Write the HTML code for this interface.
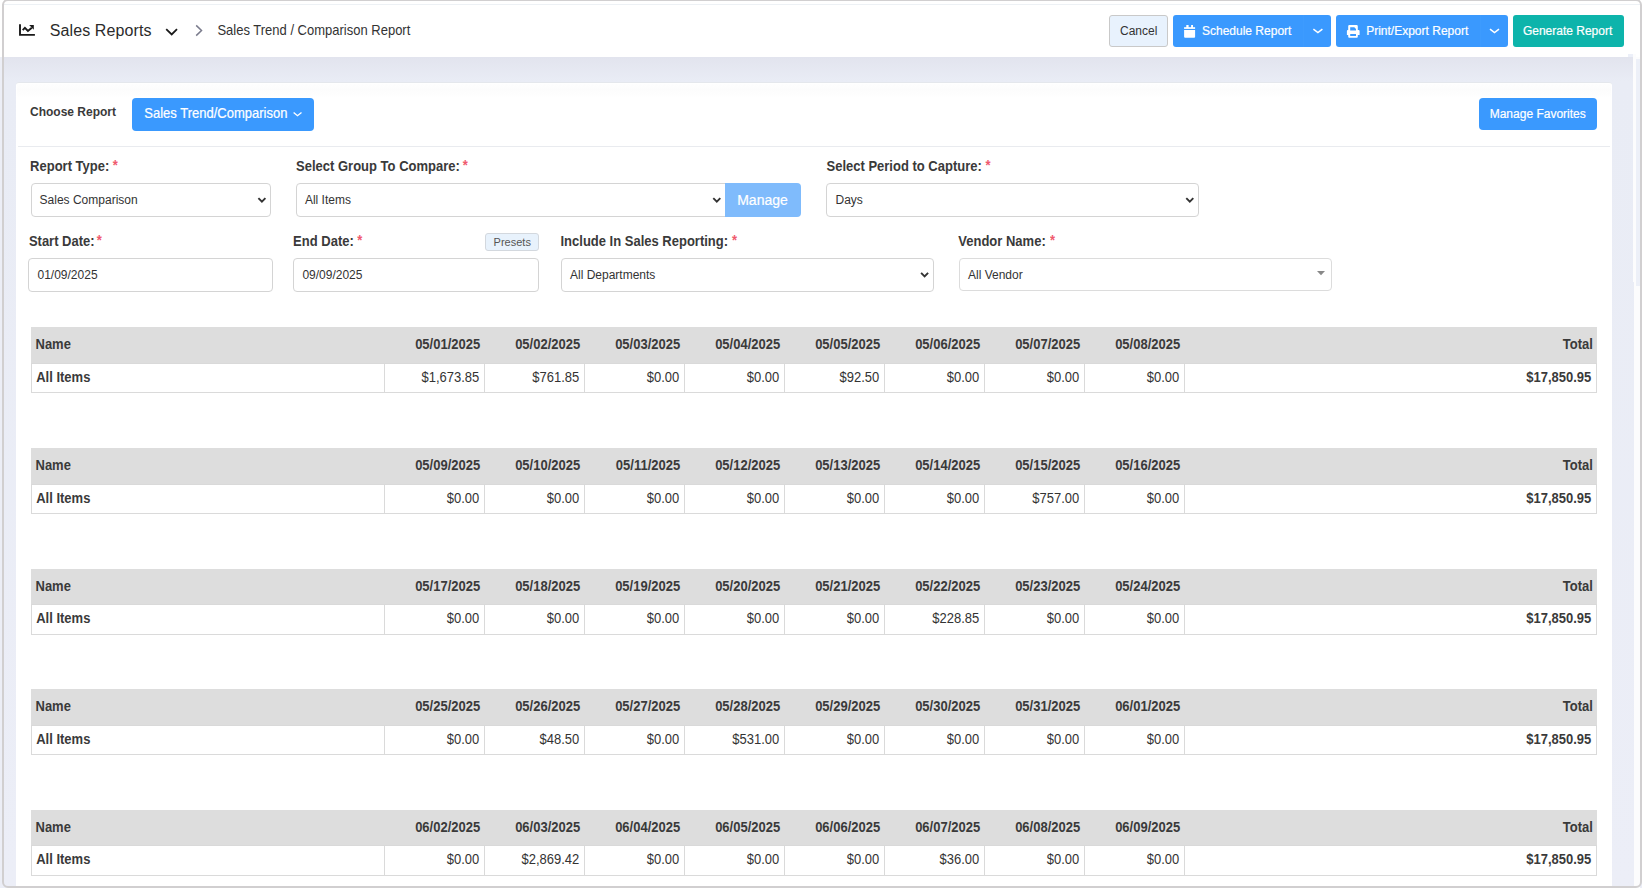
<!DOCTYPE html>
<html><head><meta charset="utf-8"><title>Sales Trend / Comparison Report</title>
<style>
html,body{margin:0;padding:0;width:1644px;height:888px;overflow:hidden;background:#fff}
body{position:relative;font-family:"Liberation Sans",sans-serif}
.r{position:absolute;display:block}
.t{position:absolute;white-space:nowrap;font-family:"Liberation Sans",sans-serif}
</style></head><body>
<div class="r" style="left:0px;top:0px;width:1644px;height:57px;background:#fff"></div>
<div class="r" style="left:0px;top:57px;width:1644px;height:831px;background:linear-gradient(#e2e4ee 0px,#e9ecf5 24px,#eceef7 100%)"></div>
<div class="r" style="left:0px;top:57px;width:2px;height:831px;background:#eceef6"></div>
<div class="r" style="left:1634px;top:57px;width:6px;height:831px;background:#fcfcfd"></div>
<div class="r" style="left:1628px;top:54px;width:5px;height:3px;background:#eceff8"></div>
<div class="r" style="left:1633px;top:54px;width:3px;height:228px;background:#fcfcfd"></div>
<div class="r" style="left:1636px;top:59px;width:4px;height:227px;background:#edf0f8"></div>
<div class="r" style="left:4px;top:3.5px;width:1636px;height:1.5px;background:#edf1f5"></div>
<svg class="r" style="left:15px;top:20px" width="25" height="20" viewBox="0 0 25 20"><path d="M5 4.2V14.9H19.9" fill="none" stroke="#1a1a1a" stroke-width="1.9"/><path d="M7.7 10.1 L9.9 7.8 L12.95 11 L16.8 7.7" fill="none" stroke="#1a1a1a" stroke-width="1.9" stroke-linejoin="miter"/><path d="M14.2 5.1 H18.8 V9.7 Z" fill="#1a1a1a"/></svg>
<span class="t" style="left:49.80px;top:23.00px;font-size:16px;line-height:16px;font-weight:400;color:#2b2b2b;letter-spacing:0.1px;">Sales Reports</span>
<svg class="r" style="left:160px;top:18px" width="50" height="24" viewBox="0 0 50 24"><path d="M6.2 11.2 L11.7 16.5 L17 11.2" fill="none" stroke="#1a1a1a" stroke-width="1.8"/><path d="M36.2 7.4 L41.5 12.5 L36.2 17.6" fill="none" stroke="#7a7b8c" stroke-width="1.5"/></svg>
<span class="t" style="left:217.40px;top:24.00px;font-size:13px;line-height:13px;font-weight:400;color:#333;transform:scaleY(1.09);transform-origin:0 11px;">Sales Trend / Comparison Report</span>
<div class="r" style="left:1109px;top:15px;width:59px;height:32px;background:#e8f2fd;border:1px solid #c9c9c9;border-radius:3px;box-sizing:border-box"></div>
<span class="t" style="left:1120.00px;top:25.00px;font-size:12px;line-height:12px;font-weight:400;color:#333;">Cancel</span>
<div class="r" style="left:1173px;top:15px;width:158px;height:32px;background:#3a99fe;border-radius:3px"></div>
<div class="r" style="left:1303px;top:15px;width:1px;height:32px;background:#3d9bfe"></div>
<svg class="r" style="left:1178px;top:20px" width="30" height="22" viewBox="0 0 30 22"><rect x="8.3" y="5" width="2.3" height="3" fill="#fff"/><rect x="13.1" y="5" width="1.9" height="3" fill="#fff"/><rect x="6.1" y="7.2" width="11" height="1.7" fill="#fff"/><path d="M6.1 10 H17.1 V16.8 Q17.1 17.8 16.1 17.8 H7.1 Q6.1 17.8 6.1 16.8 Z" fill="#fff"/></svg>
<span class="t" style="left:1202.00px;top:25.30px;font-size:12px;line-height:12px;font-weight:400;color:#fff;-webkit-text-stroke:0.2px #fff;">Schedule Report</span>
<svg class="r" style="left:1303px;top:15px" width="28" height="32" viewBox="0 0 28 32"><path d="M10.4 14.2 L14.9 17.6 L19.4 14.2" fill="none" stroke="#fff" stroke-width="1.5"/></svg>
<div class="r" style="left:1336px;top:15px;width:172px;height:32px;background:#3a99fe;border-radius:3px"></div>
<div class="r" style="left:1480px;top:15px;width:1px;height:32px;background:#3d9bfe"></div>
<svg class="r" style="left:1340px;top:20px" width="30" height="22" viewBox="0 0 30 22"><path fill="#fff" fill-rule="evenodd" d="M8.2 6.3 Q8.2 5.1 9.4 5.1 H16.6 Q17.8 5.1 17.8 6.3 V9.9 H18.6 Q19.6 9.9 19.6 10.9 V14.9 H17.8 V16.8 Q17.8 17.8 16.8 17.8 H9.2 Q8.2 17.8 8.2 16.8 V14.9 H6.9 V10.9 Q6.9 9.9 7.9 9.9 H8.2 Z M10.2 7.2 V10.6 H16 V8.9 L14.3 7.2 Z M10.2 14.1 V15.9 H16 V14.1 Z"/></svg>
<span class="t" style="left:1366.20px;top:25.30px;font-size:12px;line-height:12px;font-weight:400;color:#fff;-webkit-text-stroke:0.2px #fff;">Print/Export Report</span>
<svg class="r" style="left:1480px;top:15px" width="28" height="32" viewBox="0 0 28 32"><path d="M10 14.2 L14.5 17.6 L19 14.2" fill="none" stroke="#fff" stroke-width="1.5"/></svg>
<div class="r" style="left:1513px;top:15px;width:111px;height:32px;background:#0db4ab;border-radius:3px"></div>
<span class="t" style="left:1522.90px;top:25.30px;font-size:12px;line-height:12px;font-weight:400;color:#fff;-webkit-text-stroke:0.2px #fff;">Generate Report</span>
<div class="r" style="left:16px;top:82px;width:1596px;height:818px;background:#fff;border-top:1px solid #e4e7ec;box-sizing:border-box;border-radius:3px 3px 0 0"></div>
<div class="r" style="left:17px;top:84px;width:1594px;height:14px;background:linear-gradient(#fefefe,#fcfcfc 40%,#fff)"></div>
<div class="r" style="left:18px;top:146px;width:1592px;height:1px;background:#e9ebef"></div>
<span class="t" style="left:30.00px;top:106.00px;font-size:12px;line-height:12px;font-weight:700;color:#3a3a3a;">Choose Report</span>
<div class="r" style="left:132px;top:98px;width:182px;height:33px;background:#3a99fe;border-radius:4px"></div>
<span class="t" style="left:144.30px;top:107.00px;font-size:13px;line-height:13px;font-weight:400;color:#fff;-webkit-text-stroke:0.2px #fff;transform:scaleY(1.09);transform-origin:0 11px;">Sales Trend/Comparison</span>
<svg class="r" style="left:290px;top:106px" width="16" height="16" viewBox="0 0 16 16"><path d="M3.6 6.4 L7.5 9.7 L11.5 6.4" fill="none" stroke="#fff" stroke-width="1.35"/></svg>
<div class="r" style="left:1479px;top:98px;width:118px;height:32px;background:#3a99fe;border-radius:4px"></div>
<span class="t" style="left:1489.70px;top:108.00px;font-size:12px;line-height:12px;font-weight:400;color:#fff;-webkit-text-stroke:0.2px #fff;">Manage Favorites</span>
<span class="t" style="left:30.10px;top:160.00px;font-size:13px;line-height:13px;font-weight:700;color:#3a3a3a;transform:scaleY(1.09);transform-origin:0 11px;">Report Type:</span>
<span class="t" style="left:112.70px;top:159.00px;font-size:13px;line-height:13px;font-weight:700;color:#f05a6e;transform:scaleY(1.09);transform-origin:0 11px;">*</span>
<span class="t" style="left:296.10px;top:160.00px;font-size:13px;line-height:13px;font-weight:700;color:#3a3a3a;transform:scaleY(1.09);transform-origin:0 11px;">Select Group To Compare:</span>
<span class="t" style="left:462.70px;top:159.00px;font-size:13px;line-height:13px;font-weight:700;color:#f05a6e;transform:scaleY(1.09);transform-origin:0 11px;">*</span>
<span class="t" style="left:826.50px;top:160.00px;font-size:13px;line-height:13px;font-weight:700;color:#3a3a3a;transform:scaleY(1.09);transform-origin:0 11px;">Select Period to Capture:</span>
<span class="t" style="left:985.40px;top:159.00px;font-size:13px;line-height:13px;font-weight:700;color:#f05a6e;transform:scaleY(1.09);transform-origin:0 11px;">*</span>
<div class="r" style="left:31px;top:183px;width:240px;height:34px;border:1px solid #d4d4d4;border-radius:4px;box-sizing:border-box;background:#fff;"></div>
<span class="t" style="left:39.60px;top:194.30px;font-size:12px;line-height:12px;font-weight:400;color:#333;">Sales Comparison</span>
<svg class="r" style="left:255px;top:194px" width="14" height="12" viewBox="0 0 14 12"><path d="M3.40 4.10 L6.90 7.60 L10.40 4.10" fill="none" stroke="#333" stroke-width="1.9"/></svg>
<div class="r" style="left:296px;top:183px;width:444px;height:34px;border:1px solid #d4d4d4;border-radius:4px;box-sizing:border-box;background:#fff;border-radius:4px 0 0 4px"></div>
<span class="t" style="left:304.90px;top:194.30px;font-size:12px;line-height:12px;font-weight:400;color:#333;">All Items</span>
<svg class="r" style="left:710px;top:194px" width="14" height="12" viewBox="0 0 14 12"><path d="M3.30 4.10 L6.80 7.60 L10.30 4.10" fill="none" stroke="#333" stroke-width="1.9"/></svg>
<div class="r" style="left:725px;top:183px;width:76px;height:34px;background:#7fbbfc;border-radius:0 4px 4px 0"></div>
<span class="t" style="left:737.20px;top:193.00px;font-size:14px;line-height:14px;font-weight:400;color:#fff;-webkit-text-stroke:0.2px #fff;">Manage</span>
<div class="r" style="left:826px;top:183px;width:373px;height:34px;border:1px solid #d4d4d4;border-radius:4px;box-sizing:border-box;background:#fff;"></div>
<span class="t" style="left:835.50px;top:194.30px;font-size:12px;line-height:12px;font-weight:400;color:#333;">Days</span>
<svg class="r" style="left:1183px;top:194px" width="14" height="12" viewBox="0 0 14 12"><path d="M3.30 4.10 L6.80 7.60 L10.30 4.10" fill="none" stroke="#333" stroke-width="1.9"/></svg>
<span class="t" style="left:28.90px;top:235.00px;font-size:13px;line-height:13px;font-weight:700;color:#3a3a3a;transform:scaleY(1.09);transform-origin:0 11px;">Start Date:</span>
<span class="t" style="left:96.70px;top:234.00px;font-size:13px;line-height:13px;font-weight:700;color:#f05a6e;transform:scaleY(1.09);transform-origin:0 11px;">*</span>
<span class="t" style="left:293.10px;top:235.00px;font-size:13px;line-height:13px;font-weight:700;color:#3a3a3a;transform:scaleY(1.09);transform-origin:0 11px;">End Date:</span>
<span class="t" style="left:357.30px;top:234.00px;font-size:13px;line-height:13px;font-weight:700;color:#f05a6e;transform:scaleY(1.09);transform-origin:0 11px;">*</span>
<span class="t" style="left:560.50px;top:235.00px;font-size:13px;line-height:13px;font-weight:700;color:#3a3a3a;transform:scaleY(1.09);transform-origin:0 11px;">Include In Sales Reporting:</span>
<span class="t" style="left:731.90px;top:234.00px;font-size:13px;line-height:13px;font-weight:700;color:#f05a6e;transform:scaleY(1.09);transform-origin:0 11px;">*</span>
<span class="t" style="left:958.30px;top:235.00px;font-size:13px;line-height:13px;font-weight:700;color:#3a3a3a;transform:scaleY(1.09);transform-origin:0 11px;">Vendor Name:</span>
<span class="t" style="left:1050.00px;top:234.00px;font-size:13px;line-height:13px;font-weight:700;color:#f05a6e;transform:scaleY(1.09);transform-origin:0 11px;">*</span>
<div class="r" style="left:485px;top:233px;width:54px;height:18px;background:#e8f2fc;border:1px solid #d3d8de;border-radius:3px;box-sizing:border-box"></div>
<span class="t" style="left:493.60px;top:237.00px;font-size:11px;line-height:11px;font-weight:400;color:#555;">Presets</span>
<div class="r" style="left:28px;top:258px;width:245px;height:34px;border:1px solid #d4d4d4;border-radius:4px;box-sizing:border-box;background:#fff;"></div>
<span class="t" style="left:37.50px;top:269.00px;font-size:12px;line-height:12px;font-weight:400;color:#333;">01/09/2025</span>
<div class="r" style="left:293px;top:258px;width:246px;height:34px;border:1px solid #d4d4d4;border-radius:4px;box-sizing:border-box;background:#fff;"></div>
<span class="t" style="left:302.40px;top:269.00px;font-size:12px;line-height:12px;font-weight:400;color:#333;">09/09/2025</span>
<div class="r" style="left:561px;top:258px;width:373px;height:34px;border:1px solid #d4d4d4;border-radius:4px;box-sizing:border-box;background:#fff;"></div>
<span class="t" style="left:570.00px;top:269.00px;font-size:12px;line-height:12px;font-weight:400;color:#333;">All Departments</span>
<svg class="r" style="left:918px;top:269px" width="14" height="12" viewBox="0 0 14 12"><path d="M3.10 3.90 L6.60 7.40 L10.10 3.90" fill="none" stroke="#333" stroke-width="1.9"/></svg>
<div class="r" style="left:959px;top:258px;width:373px;height:33px;border:1px solid #d4d4d4;border-radius:4px;box-sizing:border-box;background:#fff;border-color:#dcdcdc"></div>
<span class="t" style="left:968.00px;top:269.00px;font-size:12px;line-height:12px;font-weight:400;color:#333;">All Vendor</span>
<svg class="r" style="left:1316px;top:270px" width="10" height="7" viewBox="0 0 10 7"><path d="M1 1.1 H9 L5 5.3 Z" fill="#888"/></svg>
<div class="r" style="left:31px;top:327px;width:1566px;height:37px;background:#dddddd"></div>
<div class="r" style="left:31px;top:363px;width:1566px;height:1px;background:#d9d9d9"></div>
<div class="r" style="left:31px;top:364px;width:1566px;height:29px;background:#fff;border:1px solid #dadada;border-top:none;box-sizing:border-box"></div>
<div class="r" style="left:384px;top:364px;width:1px;height:28px;background:#dadada"></div>
<div class="r" style="left:484px;top:364px;width:1px;height:28px;background:#dadada"></div>
<div class="r" style="left:584px;top:364px;width:1px;height:28px;background:#dadada"></div>
<div class="r" style="left:684px;top:364px;width:1px;height:28px;background:#dadada"></div>
<div class="r" style="left:784px;top:364px;width:1px;height:28px;background:#dadada"></div>
<div class="r" style="left:884px;top:364px;width:1px;height:28px;background:#dadada"></div>
<div class="r" style="left:984px;top:364px;width:1px;height:28px;background:#dadada"></div>
<div class="r" style="left:1084px;top:364px;width:1px;height:28px;background:#dadada"></div>
<div class="r" style="left:1184px;top:364px;width:1px;height:28px;background:#dadada"></div>
<span class="t" style="left:35.50px;top:338.00px;font-size:13px;line-height:13px;font-weight:700;color:#3a3a3a;transform:scaleY(1.09);transform-origin:0 11px;">Name</span>
<span class="t" style="left:36.20px;top:371.00px;font-size:13px;line-height:13px;font-weight:700;color:#3a3a3a;transform:scaleY(1.09);transform-origin:0 11px;">All Items</span>
<span class="t" style="right:1163.80px;top:338.00px;font-size:13px;line-height:13px;font-weight:700;color:#3a3a3a;transform:scaleY(1.09);transform-origin:0 11px;">05/01/2025</span>
<span class="t" style="right:1164.70px;top:371.00px;font-size:13px;line-height:13px;font-weight:400;color:#333;transform:scaleY(1.09);transform-origin:0 11px;">$1,673.85</span>
<span class="t" style="right:1063.80px;top:338.00px;font-size:13px;line-height:13px;font-weight:700;color:#3a3a3a;transform:scaleY(1.09);transform-origin:0 11px;">05/02/2025</span>
<span class="t" style="right:1064.70px;top:371.00px;font-size:13px;line-height:13px;font-weight:400;color:#333;transform:scaleY(1.09);transform-origin:0 11px;">$761.85</span>
<span class="t" style="right:963.80px;top:338.00px;font-size:13px;line-height:13px;font-weight:700;color:#3a3a3a;transform:scaleY(1.09);transform-origin:0 11px;">05/03/2025</span>
<span class="t" style="right:964.70px;top:371.00px;font-size:13px;line-height:13px;font-weight:400;color:#333;transform:scaleY(1.09);transform-origin:0 11px;">$0.00</span>
<span class="t" style="right:863.80px;top:338.00px;font-size:13px;line-height:13px;font-weight:700;color:#3a3a3a;transform:scaleY(1.09);transform-origin:0 11px;">05/04/2025</span>
<span class="t" style="right:864.70px;top:371.00px;font-size:13px;line-height:13px;font-weight:400;color:#333;transform:scaleY(1.09);transform-origin:0 11px;">$0.00</span>
<span class="t" style="right:763.80px;top:338.00px;font-size:13px;line-height:13px;font-weight:700;color:#3a3a3a;transform:scaleY(1.09);transform-origin:0 11px;">05/05/2025</span>
<span class="t" style="right:764.70px;top:371.00px;font-size:13px;line-height:13px;font-weight:400;color:#333;transform:scaleY(1.09);transform-origin:0 11px;">$92.50</span>
<span class="t" style="right:663.80px;top:338.00px;font-size:13px;line-height:13px;font-weight:700;color:#3a3a3a;transform:scaleY(1.09);transform-origin:0 11px;">05/06/2025</span>
<span class="t" style="right:664.70px;top:371.00px;font-size:13px;line-height:13px;font-weight:400;color:#333;transform:scaleY(1.09);transform-origin:0 11px;">$0.00</span>
<span class="t" style="right:563.80px;top:338.00px;font-size:13px;line-height:13px;font-weight:700;color:#3a3a3a;transform:scaleY(1.09);transform-origin:0 11px;">05/07/2025</span>
<span class="t" style="right:564.70px;top:371.00px;font-size:13px;line-height:13px;font-weight:400;color:#333;transform:scaleY(1.09);transform-origin:0 11px;">$0.00</span>
<span class="t" style="right:463.80px;top:338.00px;font-size:13px;line-height:13px;font-weight:700;color:#3a3a3a;transform:scaleY(1.09);transform-origin:0 11px;">05/08/2025</span>
<span class="t" style="right:464.70px;top:371.00px;font-size:13px;line-height:13px;font-weight:400;color:#333;transform:scaleY(1.09);transform-origin:0 11px;">$0.00</span>
<span class="t" style="right:51.20px;top:338.00px;font-size:13px;line-height:13px;font-weight:700;color:#3a3a3a;transform:scaleY(1.09);transform-origin:0 11px;">Total</span>
<span class="t" style="right:52.70px;top:371.00px;font-size:13px;line-height:13px;font-weight:700;color:#3a3a3a;transform:scaleY(1.09);transform-origin:0 11px;">$17,850.95</span>
<div class="r" style="left:31px;top:448px;width:1566px;height:37px;background:#dddddd"></div>
<div class="r" style="left:31px;top:484px;width:1566px;height:1px;background:#d9d9d9"></div>
<div class="r" style="left:31px;top:485px;width:1566px;height:29px;background:#fff;border:1px solid #dadada;border-top:none;box-sizing:border-box"></div>
<div class="r" style="left:384px;top:485px;width:1px;height:28px;background:#dadada"></div>
<div class="r" style="left:484px;top:485px;width:1px;height:28px;background:#dadada"></div>
<div class="r" style="left:584px;top:485px;width:1px;height:28px;background:#dadada"></div>
<div class="r" style="left:684px;top:485px;width:1px;height:28px;background:#dadada"></div>
<div class="r" style="left:784px;top:485px;width:1px;height:28px;background:#dadada"></div>
<div class="r" style="left:884px;top:485px;width:1px;height:28px;background:#dadada"></div>
<div class="r" style="left:984px;top:485px;width:1px;height:28px;background:#dadada"></div>
<div class="r" style="left:1084px;top:485px;width:1px;height:28px;background:#dadada"></div>
<div class="r" style="left:1184px;top:485px;width:1px;height:28px;background:#dadada"></div>
<span class="t" style="left:35.50px;top:459.00px;font-size:13px;line-height:13px;font-weight:700;color:#3a3a3a;transform:scaleY(1.09);transform-origin:0 11px;">Name</span>
<span class="t" style="left:36.20px;top:492.00px;font-size:13px;line-height:13px;font-weight:700;color:#3a3a3a;transform:scaleY(1.09);transform-origin:0 11px;">All Items</span>
<span class="t" style="right:1163.80px;top:459.00px;font-size:13px;line-height:13px;font-weight:700;color:#3a3a3a;transform:scaleY(1.09);transform-origin:0 11px;">05/09/2025</span>
<span class="t" style="right:1164.70px;top:492.00px;font-size:13px;line-height:13px;font-weight:400;color:#333;transform:scaleY(1.09);transform-origin:0 11px;">$0.00</span>
<span class="t" style="right:1063.80px;top:459.00px;font-size:13px;line-height:13px;font-weight:700;color:#3a3a3a;transform:scaleY(1.09);transform-origin:0 11px;">05/10/2025</span>
<span class="t" style="right:1064.70px;top:492.00px;font-size:13px;line-height:13px;font-weight:400;color:#333;transform:scaleY(1.09);transform-origin:0 11px;">$0.00</span>
<span class="t" style="right:963.80px;top:459.00px;font-size:13px;line-height:13px;font-weight:700;color:#3a3a3a;transform:scaleY(1.09);transform-origin:0 11px;">05/11/2025</span>
<span class="t" style="right:964.70px;top:492.00px;font-size:13px;line-height:13px;font-weight:400;color:#333;transform:scaleY(1.09);transform-origin:0 11px;">$0.00</span>
<span class="t" style="right:863.80px;top:459.00px;font-size:13px;line-height:13px;font-weight:700;color:#3a3a3a;transform:scaleY(1.09);transform-origin:0 11px;">05/12/2025</span>
<span class="t" style="right:864.70px;top:492.00px;font-size:13px;line-height:13px;font-weight:400;color:#333;transform:scaleY(1.09);transform-origin:0 11px;">$0.00</span>
<span class="t" style="right:763.80px;top:459.00px;font-size:13px;line-height:13px;font-weight:700;color:#3a3a3a;transform:scaleY(1.09);transform-origin:0 11px;">05/13/2025</span>
<span class="t" style="right:764.70px;top:492.00px;font-size:13px;line-height:13px;font-weight:400;color:#333;transform:scaleY(1.09);transform-origin:0 11px;">$0.00</span>
<span class="t" style="right:663.80px;top:459.00px;font-size:13px;line-height:13px;font-weight:700;color:#3a3a3a;transform:scaleY(1.09);transform-origin:0 11px;">05/14/2025</span>
<span class="t" style="right:664.70px;top:492.00px;font-size:13px;line-height:13px;font-weight:400;color:#333;transform:scaleY(1.09);transform-origin:0 11px;">$0.00</span>
<span class="t" style="right:563.80px;top:459.00px;font-size:13px;line-height:13px;font-weight:700;color:#3a3a3a;transform:scaleY(1.09);transform-origin:0 11px;">05/15/2025</span>
<span class="t" style="right:564.70px;top:492.00px;font-size:13px;line-height:13px;font-weight:400;color:#333;transform:scaleY(1.09);transform-origin:0 11px;">$757.00</span>
<span class="t" style="right:463.80px;top:459.00px;font-size:13px;line-height:13px;font-weight:700;color:#3a3a3a;transform:scaleY(1.09);transform-origin:0 11px;">05/16/2025</span>
<span class="t" style="right:464.70px;top:492.00px;font-size:13px;line-height:13px;font-weight:400;color:#333;transform:scaleY(1.09);transform-origin:0 11px;">$0.00</span>
<span class="t" style="right:51.20px;top:459.00px;font-size:13px;line-height:13px;font-weight:700;color:#3a3a3a;transform:scaleY(1.09);transform-origin:0 11px;">Total</span>
<span class="t" style="right:52.70px;top:492.00px;font-size:13px;line-height:13px;font-weight:700;color:#3a3a3a;transform:scaleY(1.09);transform-origin:0 11px;">$17,850.95</span>
<div class="r" style="left:31px;top:569px;width:1566px;height:36px;background:#dddddd"></div>
<div class="r" style="left:31px;top:604px;width:1566px;height:1px;background:#d9d9d9"></div>
<div class="r" style="left:31px;top:605px;width:1566px;height:30px;background:#fff;border:1px solid #dadada;border-top:none;box-sizing:border-box"></div>
<div class="r" style="left:384px;top:605px;width:1px;height:29px;background:#dadada"></div>
<div class="r" style="left:484px;top:605px;width:1px;height:29px;background:#dadada"></div>
<div class="r" style="left:584px;top:605px;width:1px;height:29px;background:#dadada"></div>
<div class="r" style="left:684px;top:605px;width:1px;height:29px;background:#dadada"></div>
<div class="r" style="left:784px;top:605px;width:1px;height:29px;background:#dadada"></div>
<div class="r" style="left:884px;top:605px;width:1px;height:29px;background:#dadada"></div>
<div class="r" style="left:984px;top:605px;width:1px;height:29px;background:#dadada"></div>
<div class="r" style="left:1084px;top:605px;width:1px;height:29px;background:#dadada"></div>
<div class="r" style="left:1184px;top:605px;width:1px;height:29px;background:#dadada"></div>
<span class="t" style="left:35.50px;top:580.00px;font-size:13px;line-height:13px;font-weight:700;color:#3a3a3a;transform:scaleY(1.09);transform-origin:0 11px;">Name</span>
<span class="t" style="left:36.20px;top:612.00px;font-size:13px;line-height:13px;font-weight:700;color:#3a3a3a;transform:scaleY(1.09);transform-origin:0 11px;">All Items</span>
<span class="t" style="right:1163.80px;top:580.00px;font-size:13px;line-height:13px;font-weight:700;color:#3a3a3a;transform:scaleY(1.09);transform-origin:0 11px;">05/17/2025</span>
<span class="t" style="right:1164.70px;top:612.00px;font-size:13px;line-height:13px;font-weight:400;color:#333;transform:scaleY(1.09);transform-origin:0 11px;">$0.00</span>
<span class="t" style="right:1063.80px;top:580.00px;font-size:13px;line-height:13px;font-weight:700;color:#3a3a3a;transform:scaleY(1.09);transform-origin:0 11px;">05/18/2025</span>
<span class="t" style="right:1064.70px;top:612.00px;font-size:13px;line-height:13px;font-weight:400;color:#333;transform:scaleY(1.09);transform-origin:0 11px;">$0.00</span>
<span class="t" style="right:963.80px;top:580.00px;font-size:13px;line-height:13px;font-weight:700;color:#3a3a3a;transform:scaleY(1.09);transform-origin:0 11px;">05/19/2025</span>
<span class="t" style="right:964.70px;top:612.00px;font-size:13px;line-height:13px;font-weight:400;color:#333;transform:scaleY(1.09);transform-origin:0 11px;">$0.00</span>
<span class="t" style="right:863.80px;top:580.00px;font-size:13px;line-height:13px;font-weight:700;color:#3a3a3a;transform:scaleY(1.09);transform-origin:0 11px;">05/20/2025</span>
<span class="t" style="right:864.70px;top:612.00px;font-size:13px;line-height:13px;font-weight:400;color:#333;transform:scaleY(1.09);transform-origin:0 11px;">$0.00</span>
<span class="t" style="right:763.80px;top:580.00px;font-size:13px;line-height:13px;font-weight:700;color:#3a3a3a;transform:scaleY(1.09);transform-origin:0 11px;">05/21/2025</span>
<span class="t" style="right:764.70px;top:612.00px;font-size:13px;line-height:13px;font-weight:400;color:#333;transform:scaleY(1.09);transform-origin:0 11px;">$0.00</span>
<span class="t" style="right:663.80px;top:580.00px;font-size:13px;line-height:13px;font-weight:700;color:#3a3a3a;transform:scaleY(1.09);transform-origin:0 11px;">05/22/2025</span>
<span class="t" style="right:664.70px;top:612.00px;font-size:13px;line-height:13px;font-weight:400;color:#333;transform:scaleY(1.09);transform-origin:0 11px;">$228.85</span>
<span class="t" style="right:563.80px;top:580.00px;font-size:13px;line-height:13px;font-weight:700;color:#3a3a3a;transform:scaleY(1.09);transform-origin:0 11px;">05/23/2025</span>
<span class="t" style="right:564.70px;top:612.00px;font-size:13px;line-height:13px;font-weight:400;color:#333;transform:scaleY(1.09);transform-origin:0 11px;">$0.00</span>
<span class="t" style="right:463.80px;top:580.00px;font-size:13px;line-height:13px;font-weight:700;color:#3a3a3a;transform:scaleY(1.09);transform-origin:0 11px;">05/24/2025</span>
<span class="t" style="right:464.70px;top:612.00px;font-size:13px;line-height:13px;font-weight:400;color:#333;transform:scaleY(1.09);transform-origin:0 11px;">$0.00</span>
<span class="t" style="right:51.20px;top:580.00px;font-size:13px;line-height:13px;font-weight:700;color:#3a3a3a;transform:scaleY(1.09);transform-origin:0 11px;">Total</span>
<span class="t" style="right:52.70px;top:612.00px;font-size:13px;line-height:13px;font-weight:700;color:#3a3a3a;transform:scaleY(1.09);transform-origin:0 11px;">$17,850.95</span>
<div class="r" style="left:31px;top:689px;width:1566px;height:37px;background:#dddddd"></div>
<div class="r" style="left:31px;top:725px;width:1566px;height:1px;background:#d9d9d9"></div>
<div class="r" style="left:31px;top:726px;width:1566px;height:29px;background:#fff;border:1px solid #dadada;border-top:none;box-sizing:border-box"></div>
<div class="r" style="left:384px;top:726px;width:1px;height:28px;background:#dadada"></div>
<div class="r" style="left:484px;top:726px;width:1px;height:28px;background:#dadada"></div>
<div class="r" style="left:584px;top:726px;width:1px;height:28px;background:#dadada"></div>
<div class="r" style="left:684px;top:726px;width:1px;height:28px;background:#dadada"></div>
<div class="r" style="left:784px;top:726px;width:1px;height:28px;background:#dadada"></div>
<div class="r" style="left:884px;top:726px;width:1px;height:28px;background:#dadada"></div>
<div class="r" style="left:984px;top:726px;width:1px;height:28px;background:#dadada"></div>
<div class="r" style="left:1084px;top:726px;width:1px;height:28px;background:#dadada"></div>
<div class="r" style="left:1184px;top:726px;width:1px;height:28px;background:#dadada"></div>
<span class="t" style="left:35.50px;top:700.00px;font-size:13px;line-height:13px;font-weight:700;color:#3a3a3a;transform:scaleY(1.09);transform-origin:0 11px;">Name</span>
<span class="t" style="left:36.20px;top:733.00px;font-size:13px;line-height:13px;font-weight:700;color:#3a3a3a;transform:scaleY(1.09);transform-origin:0 11px;">All Items</span>
<span class="t" style="right:1163.80px;top:700.00px;font-size:13px;line-height:13px;font-weight:700;color:#3a3a3a;transform:scaleY(1.09);transform-origin:0 11px;">05/25/2025</span>
<span class="t" style="right:1164.70px;top:733.00px;font-size:13px;line-height:13px;font-weight:400;color:#333;transform:scaleY(1.09);transform-origin:0 11px;">$0.00</span>
<span class="t" style="right:1063.80px;top:700.00px;font-size:13px;line-height:13px;font-weight:700;color:#3a3a3a;transform:scaleY(1.09);transform-origin:0 11px;">05/26/2025</span>
<span class="t" style="right:1064.70px;top:733.00px;font-size:13px;line-height:13px;font-weight:400;color:#333;transform:scaleY(1.09);transform-origin:0 11px;">$48.50</span>
<span class="t" style="right:963.80px;top:700.00px;font-size:13px;line-height:13px;font-weight:700;color:#3a3a3a;transform:scaleY(1.09);transform-origin:0 11px;">05/27/2025</span>
<span class="t" style="right:964.70px;top:733.00px;font-size:13px;line-height:13px;font-weight:400;color:#333;transform:scaleY(1.09);transform-origin:0 11px;">$0.00</span>
<span class="t" style="right:863.80px;top:700.00px;font-size:13px;line-height:13px;font-weight:700;color:#3a3a3a;transform:scaleY(1.09);transform-origin:0 11px;">05/28/2025</span>
<span class="t" style="right:864.70px;top:733.00px;font-size:13px;line-height:13px;font-weight:400;color:#333;transform:scaleY(1.09);transform-origin:0 11px;">$531.00</span>
<span class="t" style="right:763.80px;top:700.00px;font-size:13px;line-height:13px;font-weight:700;color:#3a3a3a;transform:scaleY(1.09);transform-origin:0 11px;">05/29/2025</span>
<span class="t" style="right:764.70px;top:733.00px;font-size:13px;line-height:13px;font-weight:400;color:#333;transform:scaleY(1.09);transform-origin:0 11px;">$0.00</span>
<span class="t" style="right:663.80px;top:700.00px;font-size:13px;line-height:13px;font-weight:700;color:#3a3a3a;transform:scaleY(1.09);transform-origin:0 11px;">05/30/2025</span>
<span class="t" style="right:664.70px;top:733.00px;font-size:13px;line-height:13px;font-weight:400;color:#333;transform:scaleY(1.09);transform-origin:0 11px;">$0.00</span>
<span class="t" style="right:563.80px;top:700.00px;font-size:13px;line-height:13px;font-weight:700;color:#3a3a3a;transform:scaleY(1.09);transform-origin:0 11px;">05/31/2025</span>
<span class="t" style="right:564.70px;top:733.00px;font-size:13px;line-height:13px;font-weight:400;color:#333;transform:scaleY(1.09);transform-origin:0 11px;">$0.00</span>
<span class="t" style="right:463.80px;top:700.00px;font-size:13px;line-height:13px;font-weight:700;color:#3a3a3a;transform:scaleY(1.09);transform-origin:0 11px;">06/01/2025</span>
<span class="t" style="right:464.70px;top:733.00px;font-size:13px;line-height:13px;font-weight:400;color:#333;transform:scaleY(1.09);transform-origin:0 11px;">$0.00</span>
<span class="t" style="right:51.20px;top:700.00px;font-size:13px;line-height:13px;font-weight:700;color:#3a3a3a;transform:scaleY(1.09);transform-origin:0 11px;">Total</span>
<span class="t" style="right:52.70px;top:733.00px;font-size:13px;line-height:13px;font-weight:700;color:#3a3a3a;transform:scaleY(1.09);transform-origin:0 11px;">$17,850.95</span>
<div class="r" style="left:31px;top:810px;width:1566px;height:36px;background:#dddddd"></div>
<div class="r" style="left:31px;top:845px;width:1566px;height:1px;background:#d9d9d9"></div>
<div class="r" style="left:31px;top:846px;width:1566px;height:30px;background:#fff;border:1px solid #dadada;border-top:none;box-sizing:border-box"></div>
<div class="r" style="left:384px;top:846px;width:1px;height:29px;background:#dadada"></div>
<div class="r" style="left:484px;top:846px;width:1px;height:29px;background:#dadada"></div>
<div class="r" style="left:584px;top:846px;width:1px;height:29px;background:#dadada"></div>
<div class="r" style="left:684px;top:846px;width:1px;height:29px;background:#dadada"></div>
<div class="r" style="left:784px;top:846px;width:1px;height:29px;background:#dadada"></div>
<div class="r" style="left:884px;top:846px;width:1px;height:29px;background:#dadada"></div>
<div class="r" style="left:984px;top:846px;width:1px;height:29px;background:#dadada"></div>
<div class="r" style="left:1084px;top:846px;width:1px;height:29px;background:#dadada"></div>
<div class="r" style="left:1184px;top:846px;width:1px;height:29px;background:#dadada"></div>
<span class="t" style="left:35.50px;top:821.00px;font-size:13px;line-height:13px;font-weight:700;color:#3a3a3a;transform:scaleY(1.09);transform-origin:0 11px;">Name</span>
<span class="t" style="left:36.20px;top:853.00px;font-size:13px;line-height:13px;font-weight:700;color:#3a3a3a;transform:scaleY(1.09);transform-origin:0 11px;">All Items</span>
<span class="t" style="right:1163.80px;top:821.00px;font-size:13px;line-height:13px;font-weight:700;color:#3a3a3a;transform:scaleY(1.09);transform-origin:0 11px;">06/02/2025</span>
<span class="t" style="right:1164.70px;top:853.00px;font-size:13px;line-height:13px;font-weight:400;color:#333;transform:scaleY(1.09);transform-origin:0 11px;">$0.00</span>
<span class="t" style="right:1063.80px;top:821.00px;font-size:13px;line-height:13px;font-weight:700;color:#3a3a3a;transform:scaleY(1.09);transform-origin:0 11px;">06/03/2025</span>
<span class="t" style="right:1064.70px;top:853.00px;font-size:13px;line-height:13px;font-weight:400;color:#333;transform:scaleY(1.09);transform-origin:0 11px;">$2,869.42</span>
<span class="t" style="right:963.80px;top:821.00px;font-size:13px;line-height:13px;font-weight:700;color:#3a3a3a;transform:scaleY(1.09);transform-origin:0 11px;">06/04/2025</span>
<span class="t" style="right:964.70px;top:853.00px;font-size:13px;line-height:13px;font-weight:400;color:#333;transform:scaleY(1.09);transform-origin:0 11px;">$0.00</span>
<span class="t" style="right:863.80px;top:821.00px;font-size:13px;line-height:13px;font-weight:700;color:#3a3a3a;transform:scaleY(1.09);transform-origin:0 11px;">06/05/2025</span>
<span class="t" style="right:864.70px;top:853.00px;font-size:13px;line-height:13px;font-weight:400;color:#333;transform:scaleY(1.09);transform-origin:0 11px;">$0.00</span>
<span class="t" style="right:763.80px;top:821.00px;font-size:13px;line-height:13px;font-weight:700;color:#3a3a3a;transform:scaleY(1.09);transform-origin:0 11px;">06/06/2025</span>
<span class="t" style="right:764.70px;top:853.00px;font-size:13px;line-height:13px;font-weight:400;color:#333;transform:scaleY(1.09);transform-origin:0 11px;">$0.00</span>
<span class="t" style="right:663.80px;top:821.00px;font-size:13px;line-height:13px;font-weight:700;color:#3a3a3a;transform:scaleY(1.09);transform-origin:0 11px;">06/07/2025</span>
<span class="t" style="right:664.70px;top:853.00px;font-size:13px;line-height:13px;font-weight:400;color:#333;transform:scaleY(1.09);transform-origin:0 11px;">$36.00</span>
<span class="t" style="right:563.80px;top:821.00px;font-size:13px;line-height:13px;font-weight:700;color:#3a3a3a;transform:scaleY(1.09);transform-origin:0 11px;">06/08/2025</span>
<span class="t" style="right:564.70px;top:853.00px;font-size:13px;line-height:13px;font-weight:400;color:#333;transform:scaleY(1.09);transform-origin:0 11px;">$0.00</span>
<span class="t" style="right:463.80px;top:821.00px;font-size:13px;line-height:13px;font-weight:700;color:#3a3a3a;transform:scaleY(1.09);transform-origin:0 11px;">06/09/2025</span>
<span class="t" style="right:464.70px;top:853.00px;font-size:13px;line-height:13px;font-weight:400;color:#333;transform:scaleY(1.09);transform-origin:0 11px;">$0.00</span>
<span class="t" style="right:51.20px;top:821.00px;font-size:13px;line-height:13px;font-weight:700;color:#3a3a3a;transform:scaleY(1.09);transform-origin:0 11px;">Total</span>
<span class="t" style="right:52.70px;top:853.00px;font-size:13px;line-height:13px;font-weight:700;color:#3a3a3a;transform:scaleY(1.09);transform-origin:0 11px;">$17,850.95</span>
<div class="r" style="left:2px;top:-1px;width:1640px;height:889px;border:2px solid #d1cfd0;border-radius:6px;box-sizing:border-box;background:transparent"></div>
<div class="r" style="left:0px;top:0px;width:2px;height:57px;background:#fff"></div>
<div class="r" style="left:0px;top:57px;width:2px;height:831px;background:#eceef6"></div>
<div class="r" style="left:1642px;top:0px;width:2px;height:888px;background:#fff"></div>
</body></html>
